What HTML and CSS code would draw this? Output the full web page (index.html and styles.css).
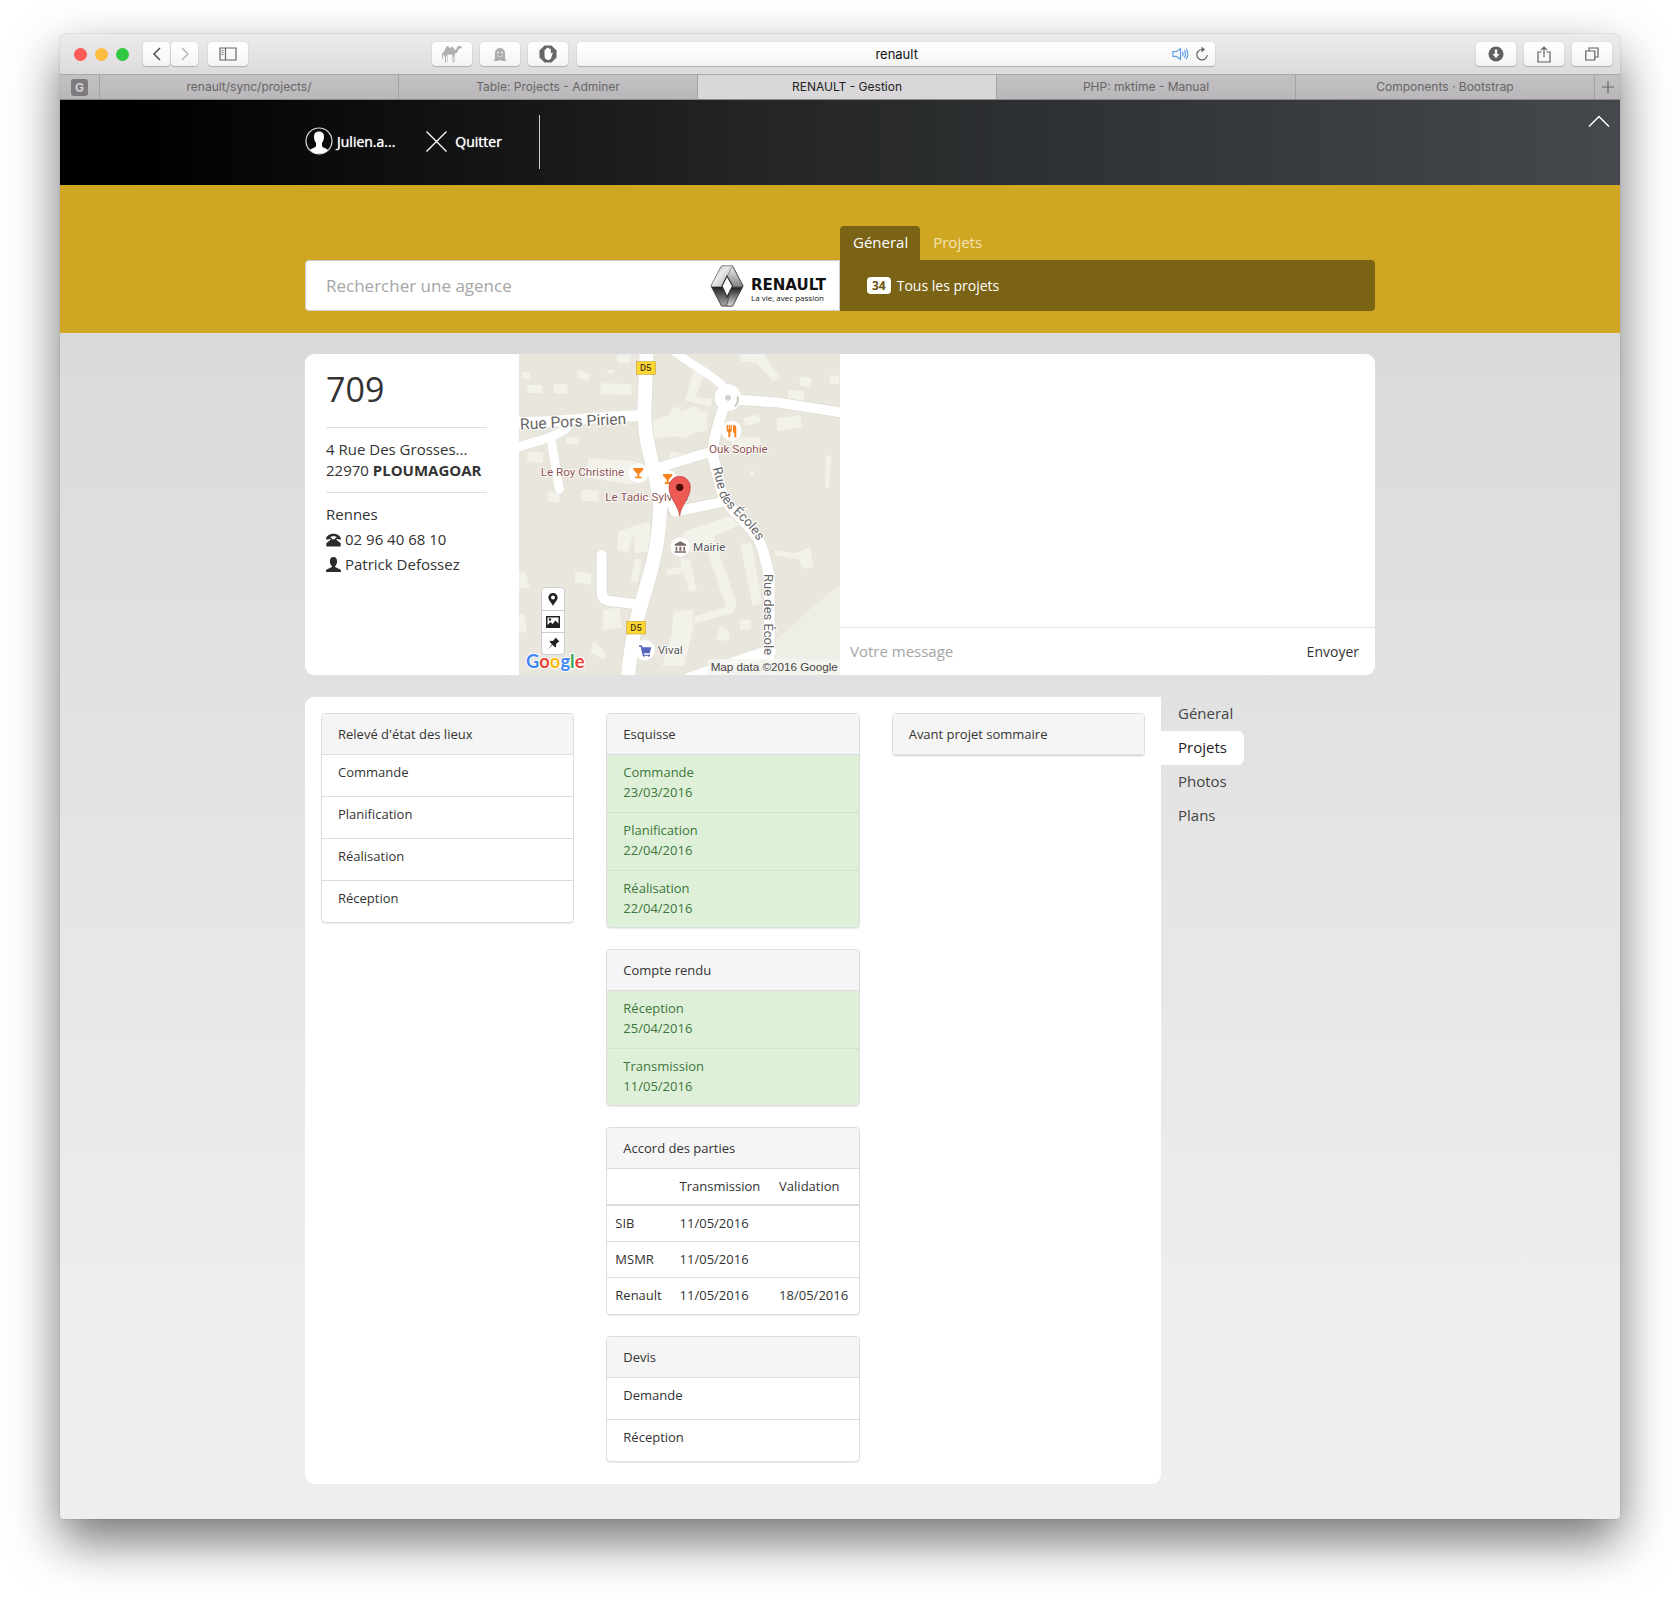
FILE: index.html
```html
<!DOCTYPE html>
<html lang="fr">
<head>
<meta charset="utf-8">
<meta name="viewport" content="width=device-width, initial-scale=1">
<title>RENAULT - Gestion</title>
<link rel="stylesheet" href="styles.css">
</head>
<body>
<div class="window">
  <div class="toolbar">
    <div class="lights"><span class="light red"></span><span class="light amber"></span><span class="light green"></span></div>
    <div class="pair">
      <button class="tool" type="button" aria-label="Back"><svg width="10" height="14" viewBox="0 0 10 14"><path d="M8 1L2 7l6 6" fill="none" stroke="#555" stroke-width="1.6"/></svg></button>
      <button class="tool" type="button" aria-label="Forward"><svg width="10" height="14" viewBox="0 0 10 14"><path d="M2 1l6 6-6 6" fill="none" stroke="#bbb" stroke-width="1.6"/></svg></button>
    </div>
    <button class="tool wide" type="button" aria-label="Sidebar"><svg width="18" height="14" viewBox="0 0 18 14"><path d="M1 1h16v12H1zM6.500 1v12" fill="none" stroke="#666" stroke-width="1.200"/><path d="M2.500 3.500h2M2.500 5.500h2M2.500 7.500h2" stroke="#777"/></svg></button>
    <span class="space-start"></span>
    <div class="extensions">
      <button class="tool wide" type="button" aria-label="Camel"><svg width="20" height="18" viewBox="0 0 20 18"><path d="M0 10c0-2 1-3 2.500-4C3.500 3 4.500 1 5.500 1S7 3 8 3s1-1.500 2-1.500S12 4 13 5c1 .5 1.500-1 2-2.500.4-1 2-2 3-1.500l2 1-.5 1.200-2.500.3C16 6 16 8 13 8.500L12.500 11v6.500h-1V12L10 9.500H6L4 11v6.500H3V12L1 9.500 1 14H0z" fill="#b0b0b0"/><path d="M5.500 10v7M10.500 10v7.500" stroke="#c4c4c4" stroke-width=".8"/></svg></button>
      <button class="tool wide" type="button" aria-label="Ghost"><svg width="14" height="15" viewBox="0 0 14 15"><path d="M2 12V6a5 5 0 0 1 10 0v6l1.500 2H9.500L7 13l-2.500 1H.5z" fill="#acacac"/><circle cx="5" cy="5.500" r="1" fill="#eee"/><circle cx="9" cy="5.500" r="1" fill="#eee"/><path d="M4 8.500q3 2.500 6 0" fill="none" stroke="#ddd" stroke-width=".8"/></svg></button>
      <button class="tool wide" type="button" aria-label="Blocker"><svg width="18" height="18" viewBox="0 0 18 18"><path d="M5.500.5h7l5 5v7l-5 5h-7l-5-5v-7z" fill="#666"/><path d="M5.500 9V5q.8-.8 1.500 0V3.500q.8-.8 1.500 0V3q.9-.8 1.700 0v1q.9-.6 1.600.2V9l1-1.500q1-.3 1 .6L12 13.500Q11 15 9 15q-3.500-.5-3.500-4z" fill="#fff"/></svg></button>
    </div>
    <div class="address">
      <input class="address-input" type="text" value="renault" aria-label="Address">
      <button class="bare" type="button" aria-label="Mute"><svg width="17" height="14" viewBox="0 0 18 14"><g fill="none" stroke="#5a9bea" stroke-width="1.200"><path d="M1 4.500h3.500L9 1.200v11.600L4.500 9.500H1z"/><path d="M11 4.500q1.500 2.500 0 5M13 3q2.500 4 0 8M15 1.500q3.500 5.500 0 11"/></g></svg></button>
      <button class="bare" type="button" aria-label="Reload"><svg width="14" height="16" viewBox="0 0 14 16"><path d="M8 3.500H7A5.200 5.200 0 1 0 12.200 9" fill="none" stroke="#666" stroke-width="1.200"/><path d="M6.500.5L10 3.500l-3.500 3z" fill="#666"/></svg></button>
    </div>
    <span class="space-end"></span>
    <div class="extensions">
      <button class="tool wide" type="button" aria-label="Downloads"><svg width="16" height="16" viewBox="0 0 16 16"><circle cx="8" cy="8" r="7.500" fill="#606060"/><path d="M6.800 3.500h2.400v4.500h2.300L8 12.200 4.500 8h2.300z" fill="#fff"/></svg></button>
      <button class="tool wide" type="button" aria-label="Share"><svg width="14" height="17" viewBox="0 0 14 17"><path d="M4.500 6H1v10h12V6H9.500M7 11V1.500M4 4.200L7 1.200l3 3" fill="none" stroke="#606060" stroke-width="1.200"/></svg></button>
      <button class="tool wide" type="button" aria-label="All tabs"><svg width="14" height="14" viewBox="0 0 14 14"><path d="M.8 4h9v9h-9zM4 4V1h9v9h-3" fill="none" stroke="#606060" stroke-width="1.200"/></svg></button>
    </div>
  </div>
  <nav class="tabs" aria-label="Browser tabs">
    <a class="pin" href="#"><span>G</span></a>
    <a class="tab" href="#">renault/sync/projects/</a>
    <a class="tab" href="#">Table: Projects - Adminer</a>
    <a class="tab current" href="#">RENAULT - Gestion</a>
    <a class="tab" href="#">PHP: mktime - Manual</a>
    <a class="tab" href="#">Components · Bootstrap</a>
    <button class="new-tab" type="button" aria-label="New tab"><svg width="12" height="12" viewBox="0 0 12 12"><path d="M6 0v12M0 6h12" stroke="#666" stroke-width="1.200"/></svg></button>
  </nav>

  <header class="header">
    <div class="container header-row">
      <a class="header-link user" href="#"><svg width="28" height="28" viewBox="0 0 28 28"><circle cx="14" cy="14" r="13" fill="none" stroke="#ddd" stroke-width="1.200"/><path d="M14 4.500c3.500 0 5 2.200 5 5.500 0 2.500-.8 4.500-2 5.800v3c0 2 4 2.200 6 4.200A12.500 12.500 0 0 1 14 26.800 12.500 12.500 0 0 1 5 23c2-2 6-2.200 6-4.200v-3C9.800 14.500 9 12.500 9 10c0-3.300 1.500-5.500 5-5.500z" fill="#fff"/></svg>Julien.a...</a>
      <a class="header-link quit" href="#"><svg width="21" height="21" viewBox="0 0 21 21"><path d="M.5.5l20 20M20.500.5l-20 20" stroke="#fff" stroke-width="1.300"/></svg>Quitter</a>
      <span class="divider"></span>
    </div>
    <button class="collapse" type="button" aria-label="Réduire"><svg width="22" height="12" viewBox="0 0 22 12"><path d="M1 11.500L11 1.500l10 10" fill="none" stroke="#fff" stroke-width="1.500"/></svg></button>
  </header>

  <section class="band">
    <div class="container band-grid">
      <form class="search">
        <input class="search-input" type="search" placeholder="Rechercher une agence" aria-label="Rechercher une agence">
        <svg class="diamond" width="34" height="42" viewBox="0 0 34 42">
          <defs>
            <linearGradient id="chrome-top" x1="0" y1="0" x2="1" y2="1"><stop offset="0" stop-color="#999"/><stop offset=".4" stop-color="#fafafa"/><stop offset="1" stop-color="#888"/></linearGradient>
            <linearGradient id="chrome-left" x1="0" y1="0" x2="0" y2="1"><stop offset="0" stop-color="#bbb"/><stop offset=".5" stop-color="#eee"/><stop offset=".53" stop-color="#222"/><stop offset="1" stop-color="#aaa"/></linearGradient>
            <linearGradient id="chrome-right" x1="0" y1="0" x2="0" y2="1"><stop offset="0" stop-color="#eee"/><stop offset=".5" stop-color="#888"/><stop offset=".55" stop-color="#222"/><stop offset="1" stop-color="#ddd"/></linearGradient>
          </defs>
          <path d="M11.500 1h11L33 21 22.500 41h-11L1 21z" fill="url(#chrome-left)" stroke="#444"/>
          <path d="M22.500 1L33 21 22.500 41h-6L22 21l-5-10z" fill="url(#chrome-right)" stroke="#444" stroke-width=".7"/>
          <path d="M11.500 1h11L17 11l-5 10-11 0z" fill="url(#chrome-top)" opacity=".7"/>
          <path d="M17 11l5.500 10L17 32l-5-11z" fill="#fff" stroke="#333" stroke-width="1.200"/>
        </svg>
        <div class="brand"><strong class="brand-name">RENAULT</strong><span class="brand-line">La vie, avec passion</span></div>
      </form>
      <div class="scope">
        <nav class="scope-tabs" aria-label="Portée"><a class="scope-tab on" href="#">Géneral</a><a class="scope-tab" href="#">Projets</a></nav>
        <div class="scope-bar"><a class="scope-link" href="#"><span class="count">34</span>Tous les projets</a></div>
      </div>
    </div>
  </section>

  <main class="container content">
    <section class="agency">
      <div class="details">
        <h1 class="number">709</h1>
        <p class="address-lines">4 Rue Des Grosses...<br>22970 <strong>PLOUMAGOAR</strong></p>
        <div class="contact">
          <p>Rennes</p>
          <p><svg width="15" height="14" viewBox="93 560 46 42"><path d="M93 577C98 557 134 557 139 577l-2 3-12-3v-6c-5-2-13-2-18 0v6l-12 3zM107 574h4v5h10v-5h4v6l13 11v10H94v-10l13-11z" fill="#2b2b2b"/></svg>02 96 40 68 10</p>
          <p><svg width="15" height="15" viewBox="93 630 46 46"><path d="M116 630c8 0 11 6 11 14 0 6-3 11-6 14v3l11 5c4 2 7 3 7 6v4H93v-4c0-3 3-4 7-6l11-5v-3c-3-3-6-8-6-14 0-8 3-14 11-14z" fill="#2b2b2b"/></svg>Patrick Defossez</p>
        </div>
      </div>
      <div class="map">
        <svg class="map-drawing" viewBox="27 27 963 963" preserveAspectRatio="xMidYMid slice" role="img" aria-label="Plan du quartier">
          <defs>
            <path id="ecoles-upper" d="M608 370L628 448C650 505 730 535 760 625"/>
            <path id="ecoles-lower" d="M763 687V936"/>
            <path id="pors-pirien" d="M31 254L370 236"/>
          </defs>
          <rect x="27" y="27" width="963" height="963" fill="#e9e6de"/>
          <path d="M990 720C930 760 850 840 780 900V990H990z" fill="#eeede6"/>
          <g fill="#f2f1ea">
            <path d="M35 80h25v20H35zM52 120h44v24H52zM132 118h40v28h-40zM205 75l35 12-5 22-36-12zM272 115l92 2v34l-94-4zM292 75h22v10h-22zM320 30l40-3 2 26-40 2zM550 75l35 10-28 70 50 8-4 22-78-18zM690 27h70l50 70-20 12-50-55-48-5zM870 95l36 3-4 30-34-6zM835 135l48 3-3 32-46-4zM960 90l28 4-2 24-28-4zM430 225l50-15 5-20 20-5 5 14 30-8 4-8 20 5 8 14 20-5v60l-40 6-30 18-30-8-60 8-4-24zM700 220l46-12 6 22-46 14zM800 220l70-10 6 36-72 12zM235 340l140 8-5 70-60-8-80-14zM170 275l38 2-2 22-38-4zM52 320l48 3-2 32-46-6zM115 440l35 5-3 28-35-4zM215 435h50v33h-50zM480 320l56 8-12 28-46-12zM720 378h12v12h-12zM948 330l16 2-8 98h-10zM325 560l55-20 40-10 4 90-50 5-2-60-20 60-32-10zM520 560l150-50 30 25-90 40 70 200-12 30-112 30-4-20 96-30-60-180-66 22zM510 640l30 5 20 90-20 8-20-60-50 10v-20l45-8zM690 595l34-2 32 180-28 10zM795 615l60 10 45-20 10 60-30 8-14-30-70-12zM375 640l20 4-12 70-22-6zM196 680l48 4-2 36-48-8zM27 680h20l12 50-32-4zM280 795l48-8 8 60-60 10zM27 810l16-2 8 54H27zM490 800l60-8v60l-28 110-66 2 30-100zM690 825h33v28h-33zM630 842l30 20-4 26-38-4zM250 885l38 40-6 20-40-24zM665 275l84 0v40h-40l-45-15z"/>
          </g>
          <g fill="none" stroke="#dedbd2" stroke-linecap="round" stroke-linejoin="round">
            <path d="M410 10L403 200C403 270 420 330 438 400L450 480C450 600 420 690 390 790C375 840 360 930 352 1010" stroke-width="46"/>
            <path d="M275 630V740Q275 765 300 768L380 778" stroke-width="34"/>
            <path d="M640 190C620 250 605 300 610 340L635 440C660 510 740 540 760 620L778 690V1010" stroke-width="36"/>
            <path d="M690 165L800 172L1010 205M440 370L610 318M490 500L640 470" stroke-width="34"/>
          </g>
          <g fill="none" stroke="#fff" stroke-linecap="round" stroke-linejoin="round">
            <path d="M410 10L403 200C403 270 420 330 438 400L450 480C450 600 420 690 390 790C375 840 360 930 352 1010" stroke-width="42"/>
            <path d="M10 232C120 235 250 215 400 211" stroke-width="32"/>
            <path d="M10 312C80 285 120 285 170 250M122 275L148 432" stroke-width="26"/>
            <path d="M480 10C540 60 600 80 645 130" stroke-width="24"/>
            <path d="M690 165L800 172L1010 205" stroke-width="30"/>
            <path d="M640 190C620 250 605 300 610 340L635 440C660 510 740 540 760 620L778 690V1010" stroke-width="32"/>
            <path d="M440 370L610 318M640 470L495 500L450 400" stroke-width="30"/>
            <path d="M275 630V740Q275 765 300 768L380 778" stroke-width="30"/>
            <path d="M540 1000L780 918" stroke-width="36"/>
          </g>
          <circle cx="654" cy="158" r="40" fill="#fff"/><circle cx="654" cy="158" r="9" fill="#d6d3cb"/>
          <path d="M674 184q14-12 8-30" fill="none" stroke="#c9c6be" stroke-width="6"/>
          <g fill="#fff"><circle cx="664" cy="257" r="30"/><circle cx="385" cy="384" r="30"/><circle cx="472" cy="402" r="28"/><circle cx="511" cy="606" r="29"/><circle cx="404" cy="915" r="31"/></g>
          <g fill="#f5841f">
            <path d="M650 240v14q0 6 5 8v15h6v-15q5-2 5-8v-14h-4v12h-2v-12h-4v12h-2v-12zM669 240q10 0 10 8v29h-6v-14h-4z"/>
            <path d="M370 369h30v5l-12 13v8h7v5h-20v-5h7v-8l-12-13z"/><path d="M459 387h28v5l-11 12v8h6v5h-18v-5h6v-8l-11-12z"/>
          </g>
          <path d="M494 598l17-9 17 9v4h-34zM497 605h5v12h-5zM508 605h6v12h-6zM520 605h5v12h-5zM494 619h34v4h-34z" fill="#7b6a66"/>
          <path d="M387 901h8l3 6h26l-5 18h-18l1 4h18v3h-22l-6-27h-5z" fill="#5765c0"/><circle cx="402" cy="932" r="3" fill="#5765c0"/><circle cx="416" cy="932" r="3" fill="#5765c0"/>
          <g class="road-label"><text><textPath href="#pors-pirien">Rue Pors Pirien</textPath></text></g>
          <g class="road-label small"><text><textPath href="#ecoles-upper">Rue des Écoles</textPath></text><text><textPath href="#ecoles-lower">Rue des École</textPath></text></g>
          <g class="place"><text x="92" y="394">Le Roy Christine</text><text x="286" y="467">Le Tadic Sylvain</text><text x="597" y="323">Ouk Sophie</text></g>
          <g class="place dark"><text x="549" y="617">Mairie</text><text x="443" y="927">Vival</text></g>
          <g fill="#fdd835" stroke="#c9a53a" stroke-width="2"><rect x="379" y="50" width="57" height="38"/><rect x="350" y="829" width="57" height="38"/></g>
          <g class="shield"><text x="407" y="79">D5</text><text x="378" y="858">D5</text></g>
          <path d="M509 512C505 480 477 460 477 426a32 32 0 0 1 64 0C541 460 513 480 509 512z" fill="#ee5b54" stroke="#b53b35" stroke-width="2"/><circle cx="509" cy="427" r="11" fill="#4c0d0b"/>
          <rect x="592" y="942" width="398" height="48" fill="#f5f4f0" opacity=".85"/>
          <text class="credit" x="602" y="979">Map data ©2016 Google</text>
          <text class="logo" x="48" y="969"><tspan fill="#4285f4">G</tspan><tspan fill="#ea4335">o</tspan><tspan fill="#fbbc05">o</tspan><tspan fill="#4285f4">g</tspan><tspan fill="#34a853">l</tspan><tspan fill="#ea4335">e</tspan></text>
        </svg>
        <div class="map-tools">
          <button type="button" aria-label="Carte"><svg width="10" height="13" viewBox="0 0 10 13"><path d="M5 0a4.600 4.600 0 0 1 4.600 4.600C9.600 7.500 6.500 9.500 5 13 3.500 9.500.4 7.500.4 4.600A4.600 4.600 0 0 1 5 0zm0 2.600a2 2 0 1 0 0 4 2 2 0 0 0 0-4z" fill="#222"/></svg></button>
          <button type="button" aria-label="Photo"><svg width="14" height="12" viewBox="0 0 14 12"><path d="M0 0h14v12H0zM1.500 1.500v7.500L4.500 6l2 2 3-3.500 3 3V1.500z" fill="#222" fill-rule="evenodd"/><circle cx="4" cy="3.500" r="1.200" fill="#222"/></svg></button>
          <button type="button" aria-label="Épingler"><svg width="13" height="13" viewBox="0 0 13 13"><path d="M8.500.5l4 4-1.300.5L9 7.200l.2 2.300-1 1L5.500 7.800.3 12.700 5 7.300 2.500 4.700l1-1 2.300.3L8 1.800z" fill="#222"/></svg></button>
        </div>
      </div>
      <form class="chat">
        <div class="messages"></div>
        <div class="compose"><input class="compose-input" type="text" placeholder="Votre message" aria-label="Votre message"><button class="send" type="button">Envoyer</button></div>
      </form>
    </section>

    <div class="work">
      <section class="board">
        <div class="column">
          <article class="panel"><h2>Relevé d'état des lieux</h2><ul><li>Commande</li><li>Planification</li><li>Réalisation</li><li>Réception</li></ul></article>
        </div>
        <div class="column">
          <article class="panel"><h2>Esquisse</h2><ul class="done"><li>Commande<br>23/03/2016</li><li>Planification<br>22/04/2016</li><li>Réalisation<br>22/04/2016</li></ul></article>
          <article class="panel"><h2>Compte rendu</h2><ul class="done"><li>Réception<br>25/04/2016</li><li>Transmission<br>11/05/2016</li></ul></article>
          <article class="panel"><h2>Accord des parties</h2>
            <table>
              <thead><tr><th></th><th scope="col">Transmission</th><th scope="col">Validation</th></tr></thead>
              <tbody>
                <tr><td>SIB</td><td>11/05/2016</td><td></td></tr>
                <tr><td>MSMR</td><td>11/05/2016</td><td></td></tr>
                <tr><td>Renault</td><td>11/05/2016</td><td>18/05/2016</td></tr>
              </tbody>
            </table>
          </article>
          <article class="panel"><h2>Devis</h2><ul><li>Demande</li><li>Réception</li></ul></article>
        </div>
        <div class="column">
          <article class="panel"><h2>Avant projet sommaire</h2></article>
        </div>
      </section>
      <nav class="side" aria-label="Rubriques"><a href="#">Géneral</a><a class="on" href="#">Projets</a><a href="#">Photos</a><a href="#">Plans</a></nav>
    </div>
  </main>
</div>
</body>
</html>
```
FILE: styles.css
```css
* { box-sizing: border-box; }
body {
  margin: 0;
  padding: 34px 60px 86px;
  background: #fff;
  color: #333;
  font: 15px/21px "Open Sans", "Noto Sans", sans-serif;
}
a { color: inherit; text-decoration: none; }
button, input { font: inherit; color: inherit; border: 0; margin: 0; padding: 0; background: none; outline: 0; }
svg { display: block; flex: none; }
h1, h2, p, ul { margin: 0; padding: 0; font-weight: 400; }
ul { list-style: none; }

.window {
  border-radius: 6px 6px 4px 4px;
  overflow: hidden;
  background: linear-gradient(#dadada 298px, #eee 1280px);
  box-shadow: 0 0 1px rgba(0, 0, 0, .5), 0 22px 50px rgba(0, 0, 0, .55);
}
.container { width: 100%; max-width: 1070px; margin: 0 auto; }

/* Browser chrome */
.toolbar {
  display: flex;
  align-items: center;
  height: 40px;
  padding: 0 8px 0 14px;
  background: linear-gradient(#edebed, #dddadd);
  font: 13px/16px Inter, "Liberation Sans", sans-serif;
}
.lights { display: flex; gap: 8px; margin-right: 14px; }
.light { width: 13px; height: 13px; border-radius: 50%; }
.red { background: #fc5b57; }
.amber { background: #fdbc40; }
.green { background: #2fc840; }
.pair { display: flex; gap: 1px; margin-right: 10px; }
.tool {
  display: flex;
  align-items: center;
  justify-content: center;
  width: 27px;
  height: 24px;
  border-radius: 4px;
  background: linear-gradient(#fff, #f4f4f4);
  box-shadow: 0 0 1px rgba(0, 0, 0, .25), 0 1px 1px rgba(0, 0, 0, .2);
}
.tool.wide { width: 40px; }
.space-start { flex: 12; }
.space-end { flex: 17; }
.extensions { display: flex; gap: 8px; }
.address {
  display: flex;
  align-items: center;
  gap: 6px;
  flex: 0 1 638px;
  height: 24px;
  margin-left: 9px;
  padding: 0 6px 0 50px;
  border-radius: 4px;
  background: linear-gradient(#fff, #f4f4f4);
  box-shadow: 0 0 1px rgba(0, 0, 0, .25), 0 1px 1px rgba(0, 0, 0, .2);
}
.address-input { flex: 1; min-width: 0; text-align: center; color: #111; }
.tabs {
  display: flex;
  height: 26px;
  border-top: 1px solid #aaa8aa;
  border-bottom: 1px solid #8a888a;
  background: linear-gradient(#c3c1c3, #b9b7b9);
  color: #666;
  font: 12px/24px Inter, "Liberation Sans", sans-serif;
}
.pin { width: 39px; padding: 4px 0 0 11px; }
.pin span { display: block; width: 17px; height: 17px; border-radius: 3px; background: #7c7a7c; color: #d4d2d4; font-weight: 700; line-height: 17px; text-align: center; }
.tab { flex: 1; border-left: 1px solid #a3a1a3; text-align: center; white-space: nowrap; overflow: hidden; }
.tab.current { background: #dad7da; color: #222; }
.new-tab { display: flex; align-items: center; justify-content: center; width: 26px; border-left: 1px solid #a3a1a3; }

/* Site header */
.header { position: relative; background: linear-gradient(90deg, #000 5%, #232526 45%, #45484d 100%); color: #fff; font-size: 14px; }
.header-row { display: flex; align-items: center; padding: 15px 0 16px; }
.header-link { display: flex; align-items: center; padding-bottom: 2px; text-shadow: 0 0 1px #fff; }
.user { gap: 4px; margin-right: 31px; }
.quit { gap: 8px; margin-right: 37px; }
.divider { width: 1px; height: 54px; background: #ccc; }
.collapse { position: absolute; top: 15px; right: 10px; }

/* Search band */
.band { padding: 41px 0 22px; background: #cfa722; }
.band-grid { display: grid; grid-template-columns: 1fr 1fr; align-items: end; }
.search { display: flex; align-items: center; height: 51px; padding: 0 13px 0 20px; border: 1px solid #ccc; border-radius: 4px 0 0 4px; background: #fff; }
.search-input { flex: 1; min-width: 0; font-size: 17px; line-height: 24px; }
::placeholder { color: #a5a5a5; opacity: 1; }
.diamond { margin-right: 7px; }
.brand { display: flex; flex-direction: column; padding-top: 9px; color: #111; }
.brand-name { font: 700 15px/14px "DejaVu Sans", sans-serif; }
.brand-line { font-size: 8px; line-height: 11px; }
.scope-tabs { display: flex; font-size: 15px; }
.scope-tab { padding: 6px 12px 7px 13px; border-radius: 4px 4px 0 0; color: #f3e3b4; }
.scope-tab.on { background: #7b6316; color: #fff; }
.scope-bar { display: flex; align-items: center; height: 51px; padding: 0 27px; border-radius: 0 4px 4px 0; background: #7b6316; color: #fff; font-size: 14px; }
.scope-link { display: flex; align-items: center; gap: 6px; }
.count { padding: 0 5px; border-radius: 4px; background: #fff; color: #6b5613; font-size: 12px; line-height: 17px; font-weight: 700; }

/* Agency card */
.content { padding: 21px 0 35px; }
.agency { display: grid; grid-template-columns: 2fr 3fr 5fr; border-radius: 9px; overflow: hidden; background: #fff; }
.details { min-width: 0; padding: 14px 32px 14px 21px; white-space: nowrap; }
.number { padding-bottom: 17px; border-bottom: 1px solid #ddd; font-size: 34px; line-height: 42px; }
.address-lines { padding: 11px 0; border-bottom: 1px solid #ddd; }
.contact { padding-top: 9px; }
.contact p { display: flex; align-items: center; gap: 4px; height: 25px; }
.map { position: relative; min-width: 0; }
.map-drawing { width: 100%; aspect-ratio: 1; }
.road-label { font: 47px Roboto, sans-serif; fill: #666; stroke: #fff; stroke-width: 6px; paint-order: stroke; }
.road-label.small { font-size: 39px; }
.place { font: 35px Roboto, sans-serif; fill: #8d5350; stroke: #fff; stroke-width: 5px; paint-order: stroke; }
.place.dark { fill: #555; }
.shield { font: 500 28px Roboto, sans-serif; fill: #4a3d10; text-anchor: middle; }
.credit { font: 35px "Liberation Sans", sans-serif; fill: #444; }
.logo { font: 700 55px Lato, sans-serif; stroke: #fff; stroke-width: 6px; paint-order: stroke; }
.map-tools { position: absolute; left: 22px; bottom: 20px; width: 24px; border: 1px solid #ccc; border-radius: 4px; background: #fff; }
.map-tools button { display: flex; align-items: center; justify-content: center; width: 22px; height: 22px; }
.map-tools button + button { border-top: 1px solid #ccc; }
.chat { display: flex; flex-direction: column; min-width: 0; }
.messages { flex: 1; }
.compose { display: flex; align-items: center; height: 48px; padding: 0 16px 0 10px; border-top: 1px solid #e3e3e3; }
.compose-input { flex: 1; min-width: 0; }
.send { font-size: 14px; }

/* Project board */
.work { display: grid; grid-template-columns: 4fr 1fr; margin-top: 22px; align-items: start; }
.board { display: grid; grid-template-columns: repeat(3, 1fr); gap: 32px; padding: 16px 16px 22px; border-radius: 9px 0 9px 9px; background: #fff; font-size: 13px; line-height: 20px; }
.column { display: flex; flex-direction: column; gap: 21px; min-width: 0; }
.panel { border: 1px solid #ddd; border-radius: 4px; overflow: hidden; box-shadow: 0 1px 1px rgba(0, 0, 0, .08); }
.panel h2 { padding: 10px 16px; border-bottom: 1px solid #ddd; background: #f5f5f5; font-size: 13px; line-height: 20px; }
.panel li { min-height: 42px; padding: 7px 16px 10px; border-bottom: 1px solid #ddd; }
.panel li:last-child { min-height: 41px; padding-bottom: 9px; border-bottom: 0; }
.done { background: #dff0d8; color: #3c763d; }
.panel .done li { border-color: #d0e3c9; }
table { width: 100%; border-collapse: collapse; }
th, td { height: 36px; padding: 8px; border-top: 1px solid #ddd; line-height: 19px; font-weight: 400; text-align: left; }
th { border-top: 0; border-bottom: 2px solid #ddd; }
.side { display: flex; flex-direction: column; align-items: flex-start; color: #444; }
.side a { padding: 6px 17px 7px; border-radius: 0 6px 6px 0; }
.side .on { background: #fff; color: #222; }
```
